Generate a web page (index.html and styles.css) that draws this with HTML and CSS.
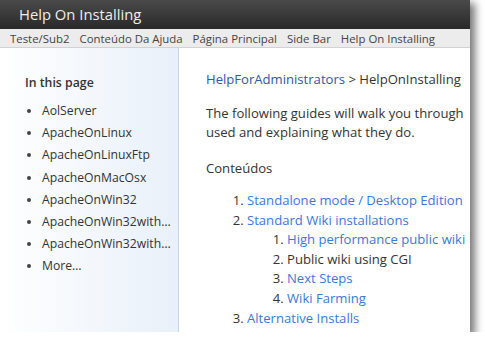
FILE: index.html
```html
<!DOCTYPE html>
<html lang="pt">
<head>
  <meta charset="UTF-8" />
  <title>Help On Installing</title>
  <link rel="stylesheet" href="styles.css">
</head>
<body>

  <div class="window">
    <div class="titlebar">Help On Installing</div>
    <div class="navbar">
      <span>Teste/Sub2</span>
      <span>Conteúdo Da Ajuda</span>
      <span>Página Principal</span>
      <span>Side Bar</span>
      <span>Help On Installing</span>
    </div>

    <div class="content">
      <div class="sidebar">
        <h3>In this page</h3>
        <ul>
          <li>AolServer</li>
          <li>ApacheOnLinux</li>
          <li>ApacheOnLinuxFtp</li>
          <li>ApacheOnMacOsx</li>
          <li>ApacheOnWin32</li>
          <li>ApacheOnWin32with…</li>
          <li>ApacheOnWin32with…</li>
          <li>More…</li>
        </ul>
      </div>

      <div class="main">
        <div class="crumbs"><a href="#">HelpForAdministrators</a> &gt; HelpOnInstalling</div>
        <p>The following guides will walk you through<br>used and explaining what they do.</p>
        <p class="toc-title">Conteúdos</p>
        <ol>
          <li><a href="#">Standalone mode / Desktop Edition</a></li>
          <li><a href="#">Standard Wiki installations</a>
            <ol>
              <li><a href="#">High performance public wiki</a></li>
              <li>Public wiki using CGI</li>
              <li><a href="#">Next Steps</a></li>
              <li><a href="#">Wiki Farming</a></li>
            </ol>
          </li>
          <li><a href="#">Alternative Installs</a></li>
        </ol>
      </div>
    </div>
  </div>

</body>
</html>
```
FILE: styles.css
```css
body {
  margin: 0;
  background-color: #fff;
  font-family: "Open Sans", "Noto Sans", sans-serif;
  color: #333;
}
.window {
  width: 470px;
  height: 332px;
  display: flex;
  flex-direction: column;
  overflow: hidden;
  background-color: #fff;
  box-shadow: 4px 4px 8px 1px #0008;
}
.titlebar {
  height: 29px;
  line-height: 28px;
  padding-left: 19px;
  font-size: 14.8px;
  color: #eee;
  background: linear-gradient(#4a4a4a, #292929);
}
.navbar {
  height: 18px;
  display: flex;
  gap: 10px;
  padding-left: 10px;
  align-items: center;
  font-size: 11.4px;
  color: #444;
  background-color: #ececec;
  border-bottom: 1px solid #d2d2d2;
  white-space: nowrap;
}
.content {
  flex: 1;
  display: flex;
  min-height: 0;
}
.sidebar {
  width: 178px;
  flex-shrink: 0;
  padding-top: 26px;
  background: linear-gradient(to right, #fff, #e8f0f9);
  border-right: 1px solid #c6d6e6;
  white-space: nowrap;
}
.sidebar h3 {
  margin: 0 0 8px 25px;
  font-size: 12.3px;
  font-weight: 600;
  line-height: 18px;
  color: #333;
}
.sidebar ul {
  margin: 0;
  padding-left: 42px;
  font-size: 12.2px;
  line-height: 22.2px;
  color: #333;
}
.sidebar li::marker {
  color: #444;
}
.main {
  flex: 1;
  padding: 22px 0 0 27px;
  overflow: hidden;
  white-space: nowrap;
  font-size: 13.1px;
  line-height: 19px;
  color: #333;
}
.main a {
  color: #3a78d8;
  text-decoration: none;
}
.crumbs a {
  color: #3355aa;
}
.main p {
  margin: 15px 0 0;
}
.main .toc-title {
  margin-top: 17px;
}
.main ol {
  margin: 13px 0 0;
  padding-left: 41px;
  line-height: 19.6px;
}
.main ol ol {
  margin: 0;
  padding-left: 40px;
}
```
